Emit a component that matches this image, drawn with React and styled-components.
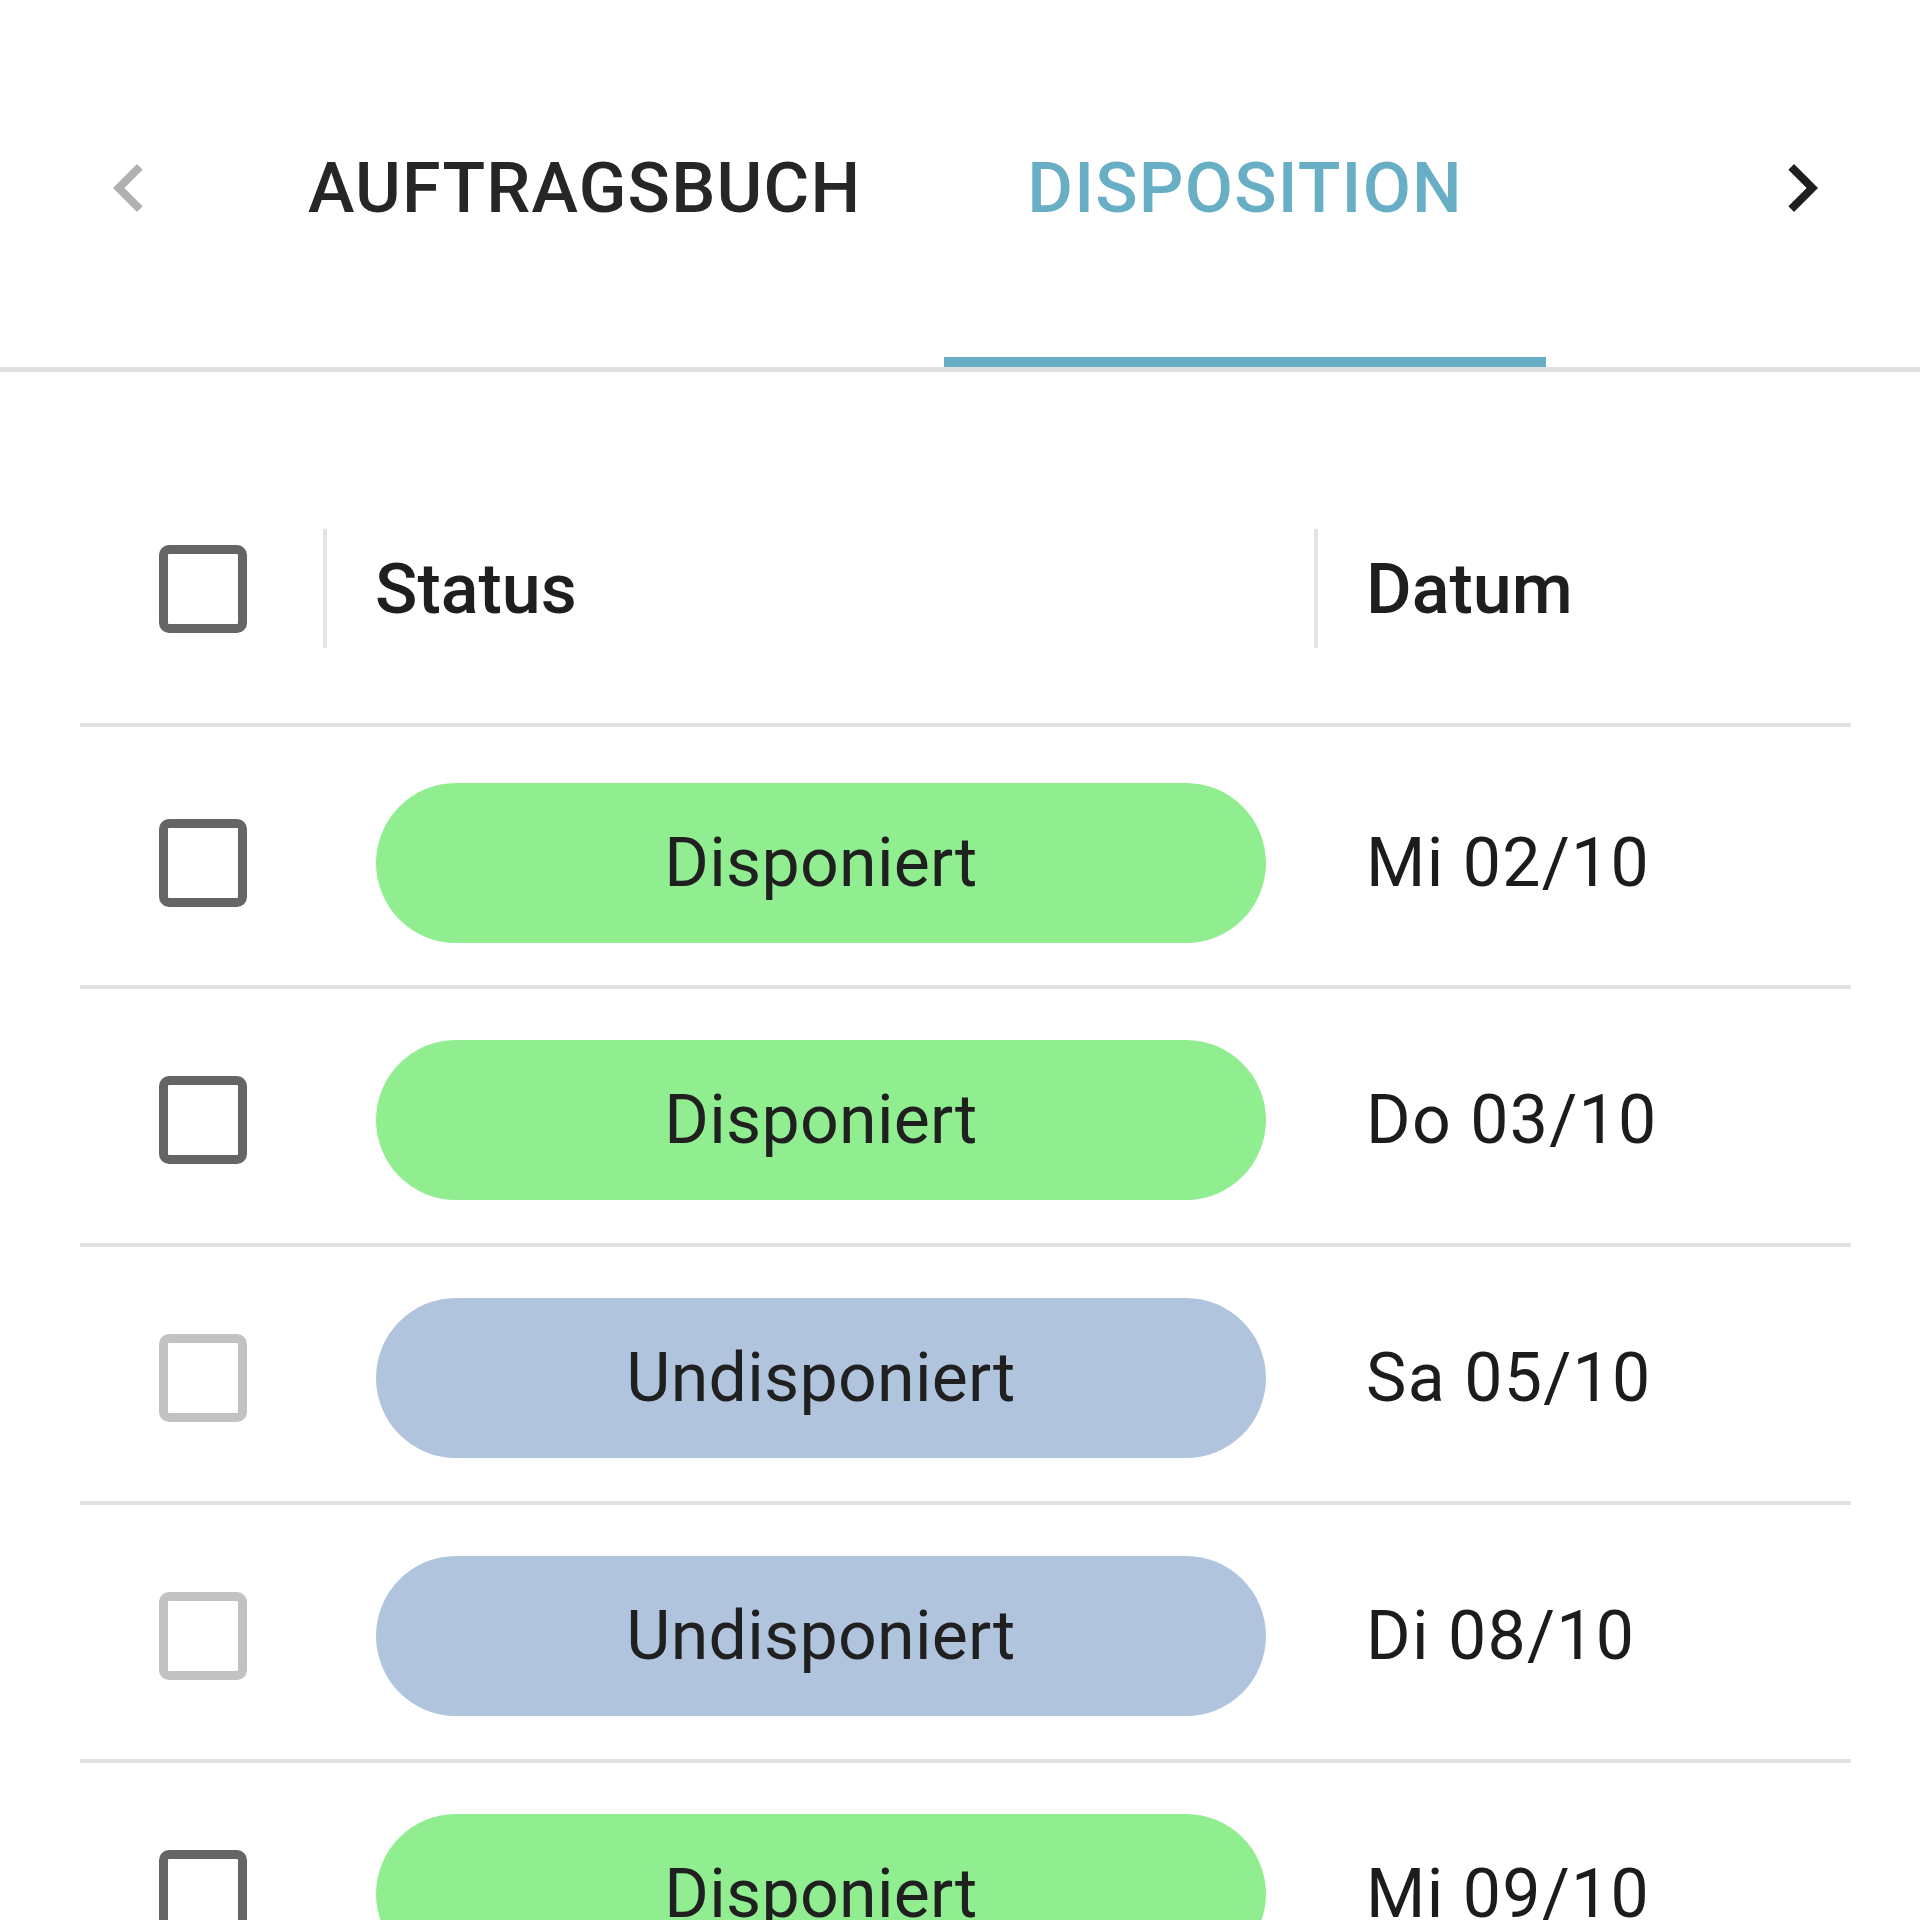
import styled, { createGlobalStyle } from "styled-components";

const GlobalStyle = createGlobalStyle`
    body {
        margin: 0;
        background: #fff;
        font-family: Roboto, "Liberation Sans", sans-serif;
    }
`

const rows = [
    { status: "Disponiert", date: "Mi 02/10", muted: false },
    { status: "Disponiert", date: "Do 03/10", muted: false },
    { status: "Undisponiert", date: "Sa 05/10", muted: true },
    { status: "Undisponiert", date: "Di 08/10", muted: true },
    { status: "Disponiert", date: "Mi 09/10", muted: false },
]

function ChevronLeft({ color }){
    return(
        <svg width="96" height="96" viewBox="0 0 24 24" fill={color}>
            <path d="M15.41 7.41 14 6l-6 6 6 6 1.41-1.41L10.83 12z" />
        </svg>
    )
}

function ChevronRight({ color }){
    return(
        <svg width="96" height="96" viewBox="0 0 24 24" fill={color}>
            <path d="M10 6 8.59 7.41 13.17 12l-4.58 4.59L10 18l6-6z" />
        </svg>
    )
}

function App(){
    return(
        <Page>
            <GlobalStyle />
            <TabBar>
                <ScrollButton side="left">
                    <ChevronLeft color="#b0b0b0" />
                </ScrollButton>
                <Tab>AUFTRAGSBUCH</Tab>
                <Tab active>DISPOSITION</Tab>
                <ScrollButton side="right">
                    <ChevronRight color="#1f1f1f" />
                </ScrollButton>
            </TabBar>
            <Table>
                <HeaderRow>
                    <CheckCell><Checkbox /></CheckCell>
                    <HeaderCell><ColDivider /><HeaderLabel>Status</HeaderLabel></HeaderCell>
                    <HeaderCell><ColDivider /><HeaderLabel>Datum</HeaderLabel></HeaderCell>
                </HeaderRow>
                {rows.map((r, i) => (
                    <Row key={i} first={i === 0}>
                        <CheckCell><Checkbox muted={r.muted} /></CheckCell>
                        <StatusCell>
                            <Pill done={r.status === "Disponiert"}>{r.status}</Pill>
                        </StatusCell>
                        <DateCell>{r.date}</DateCell>
                    </Row>
                ))}
            </Table>
        </Page>
    )
}

const Page = styled.div`
    width: 1920px;
    min-height: 1920px;
    background: #fff;
`

const TabBar = styled.div`
    display: flex;
    align-items: flex-start;
    border-bottom: 5px solid #e0e0e0;
`

const ScrollButton = styled.div`
    display: flex;
    align-items: center;
    padding-top: 140px;
    height: 96px;
    width: ${props => props.side === "left" ? "144px" : "auto"};
    padding-left: ${props => props.side === "left" ? "81px" : "0"};
    padding-right: ${props => props.side === "right" ? "70px" : "0"};
    margin-left: ${props => props.side === "right" ? "auto" : "0"};
`

const Tab = styled.div`
    padding: 147px 83px 128px;
    line-height: 82px;
    font-size: 70px;
    font-weight: 500;
    letter-spacing: 1.2px;
    color: ${props => props.active ? "#68afc6" : "#262626"};
    border-bottom: 10px solid ${props => props.active ? "#68afc6" : "transparent"};
`

const Table = styled.div`
    margin: 82px 69px 0 80px;
`

const HeaderRow = styled.div`
    display: grid;
    grid-template-columns: 243px 991px 1fr;
    align-items: center;
    height: 269px;
    border-bottom: 4px solid #e2e2e2;
`

const Row = styled.div`
    display: grid;
    grid-template-columns: 243px 991px 1fr;
    align-items: center;
    box-sizing: border-box;
    height: ${props => props.first ? "262px" : "258px"};
    padding-top: ${props => props.first ? "14px" : "8px"};
    border-bottom: 4px solid #e2e2e2;
`

const CheckCell = styled.div`
    display: flex;
    align-items: center;
    padding-left: 79px;
`

const Checkbox = styled.div`
    width: 70px;
    height: 70px;
    border: 9px solid ${props => props.muted ? "#c2c2c2" : "#656565"};
    border-radius: 10px;
    background: #fff;
`

const HeaderCell = styled.div`
    display: flex;
    align-items: center;
`

const ColDivider = styled.div`
    width: 4px;
    height: 119px;
    background: #e4e4e4;
    margin-right: 48px;
`

const HeaderLabel = styled.span`
    font-size: 70px;
    font-weight: 500;
    color: #1e1e1e;
`

const StatusCell = styled.div`
    padding-left: 53px;
`

const Pill = styled.div`
    width: 890px;
    height: 160px;
    border-radius: 80px;
    background: ${props => props.done ? "#90ee90" : "#b0c4de"};
    display: flex;
    align-items: center;
    justify-content: center;
    font-size: 68px;
    letter-spacing: 0.3px;
    color: #202020;
`

const DateCell = styled.div`
    padding-left: 52px;
    font-size: 68px;
    letter-spacing: 1.3px;
    color: #1c1c1c;
`

export default App
